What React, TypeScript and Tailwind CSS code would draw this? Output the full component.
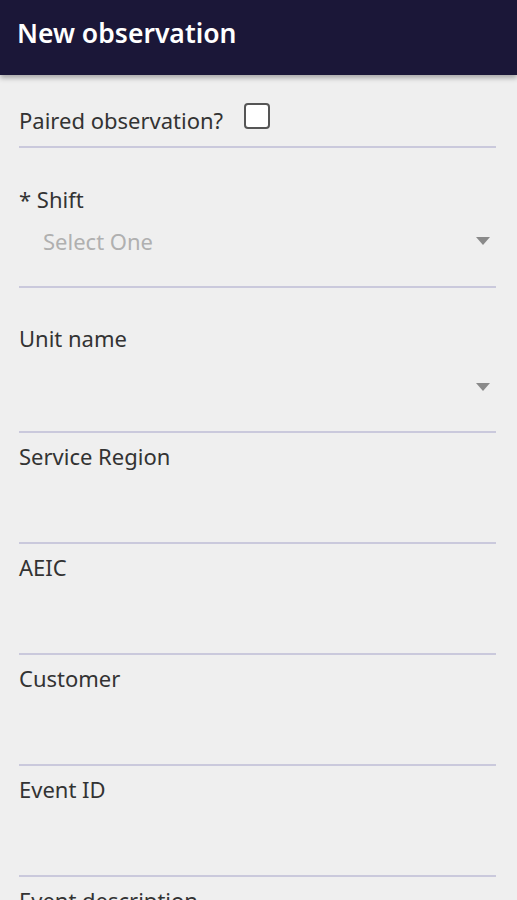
import React from 'react';

const font = { fontFamily: '"Noto Sans", "Open Sans", sans-serif' };

function Divider() {
  return <div className="h-[2px] bg-[#cac9dc]" />;
}

function Caret() {
  return (
    <svg width="14" height="8" viewBox="0 0 14 8" className="mr-[6px]">
      <path d="M0 0 L14 0 L7 8 Z" fill="#8a8a8a" />
    </svg>
  );
}

function TextField({ label }: { label: string }) {
  return (
    <div>
      <div className="pt-[9px] pb-[72px] text-[22px] leading-[28px] text-[#333]">{label}</div>
      <Divider />
    </div>
  );
}

export default function App() {
  const textFields = ['Service Region', 'AEIC', 'Customer', 'Event ID', 'Event description'];

  return (
    <div className="h-[900px] overflow-hidden bg-[#efefef]" style={font}>
      {/* Toolbar */}
      <div className="relative z-10 h-[75px] bg-[#1b1738] px-[17px] pt-[14px] shadow-[0_3px_5px_rgba(0,0,0,0.3)]">
        <h1 className="text-[26.5px] font-semibold leading-[38px] text-white">New observation</h1>
      </div>

      <div className="pl-[19px] pr-[21px]">
        {/* Paired */}
        <div className="flex items-start pt-[28px] pb-[12px]">
          <span className="mt-[3px] text-[22px] leading-[28px] text-[#333]">Paired observation?</span>
          <span className="ml-[21px] h-[26px] w-[26px] rounded-[4px] border-2 border-[#555] bg-white" />
        </div>
        <Divider />

        {/* Shift */}
        <div className="pt-[37px] pb-[31px]">
          <div className="text-[22px] leading-[28px] text-[#333]">* Shift</div>
          <div className="mt-[14px] flex items-center justify-between">
            <span className="pl-[24px] text-[22px] leading-[28px] text-[#b0b0b0]">Select One</span>
            <Caret />
          </div>
        </div>
        <Divider />

        {/* Unit name */}
        <div className="pt-[36px] pb-[30px]">
          <div className="text-[22px] leading-[28px] text-[#333]">Unit name</div>
          <div className="mt-[21px] flex h-[28px] items-center justify-end">
            <Caret />
          </div>
        </div>
        <Divider />

        {textFields.map((f) => (
          <TextField key={f} label={f} />
        ))}
      </div>
    </div>
  );
}
